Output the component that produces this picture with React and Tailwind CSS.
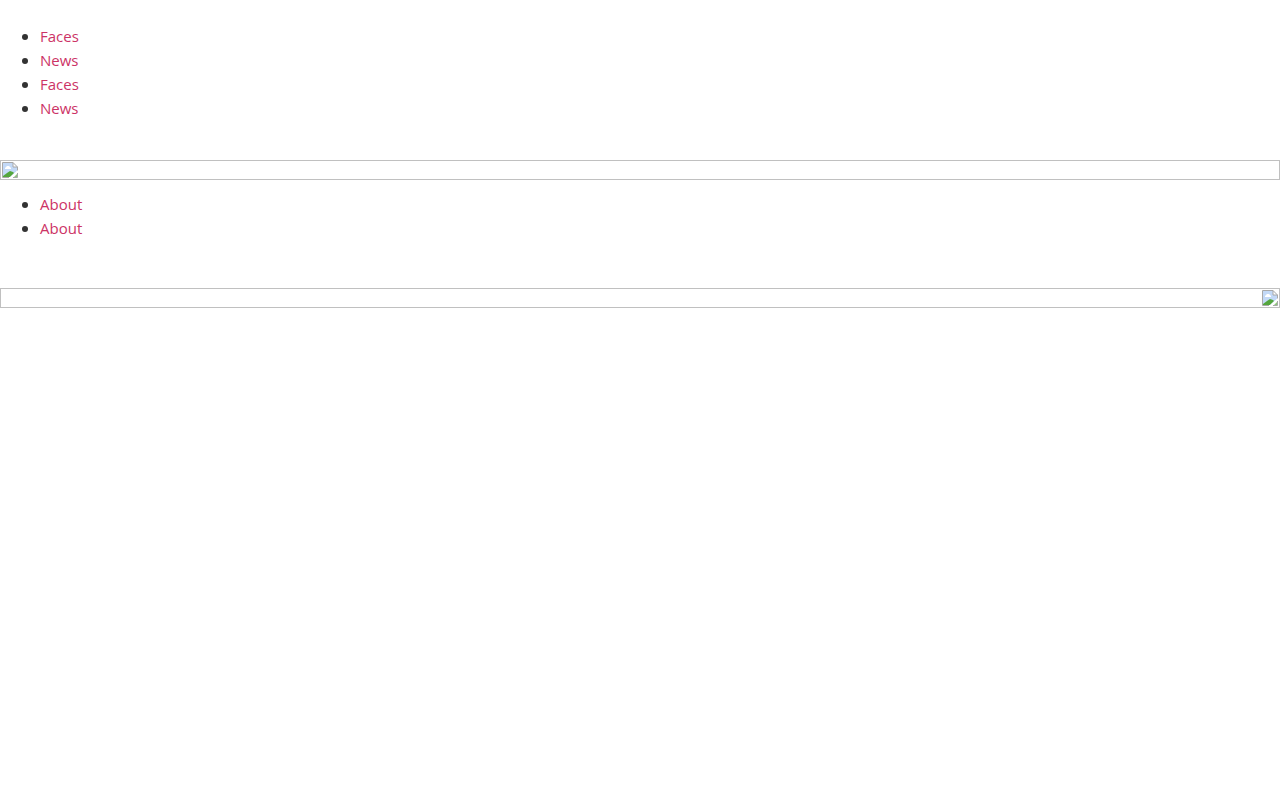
import React from 'react'

const mainLinks = ['Faces', 'News', 'Faces', 'News']
const aboutLinks = ['About', 'About']

const ImageIcon = () => (
  <svg width="16" height="16" viewBox="0 0 16 16" aria-hidden="true">
    <path d="M1 1h10l4 4v4l-6 6H1z" fill="#c3d9f7" />
    <path d="M3 7V6l1-1 1-1h2l1 1 1 1v1z" fill="#fff" />
    <path d="M1 15v-1l4-3 3-2 3 1 1 1-4 4z" fill="#54a63d" />
    <path d="M11 15l4-4v4z" fill="#8cc47c" />
    <path d="M7 16l9-8v3l-5 5z" fill="#fff" />
    <path d="M11 1v4h4z" fill="#fff" />
    <path d="M7 15.500H.5V.5h10.500l4.500 4.500v3.500M11 .5V5h4.500M15.500 11v4.500H11" fill="none" stroke="#a8a8a8" />
  </svg>
)

const LinkList = ({ links }) => (
  <ul className='list-disc pl-10'>
    {links.map((link, index) => (
      <li key={`${link}-${index}`} className='marker:text-[16px]'>
        <a href="#" className='text-[#cc3366]'>{link}</a>
      </li>
    ))}
  </ul>
)

const ImageFrame = ({ alignEnd }) => (
  <div
    role="img"
    aria-label="Slide"
    className={`flex h-5 w-full items-center border border-[#c0c0c0] px-px ${alignEnd ? 'justify-end' : 'justify-start'}`}
  >
    <ImageIcon />
  </div>
)

const App = () => {
  return (
    <div className="min-h-screen bg-white pt-6 font-['Open_Sans','Noto_Sans',sans-serif] text-[15px] leading-6 text-[#333333]">
      <nav aria-label="Main">
        <LinkList links={mainLinks} />
      </nav>
      <div className='mt-10'>
        <ImageFrame />
      </div>
      <nav aria-label="About" className='mt-3'>
        <LinkList links={aboutLinks} />
      </nav>
      <div className='mt-12'>
        <ImageFrame alignEnd />
      </div>
    </div>
  )
}

export default App
